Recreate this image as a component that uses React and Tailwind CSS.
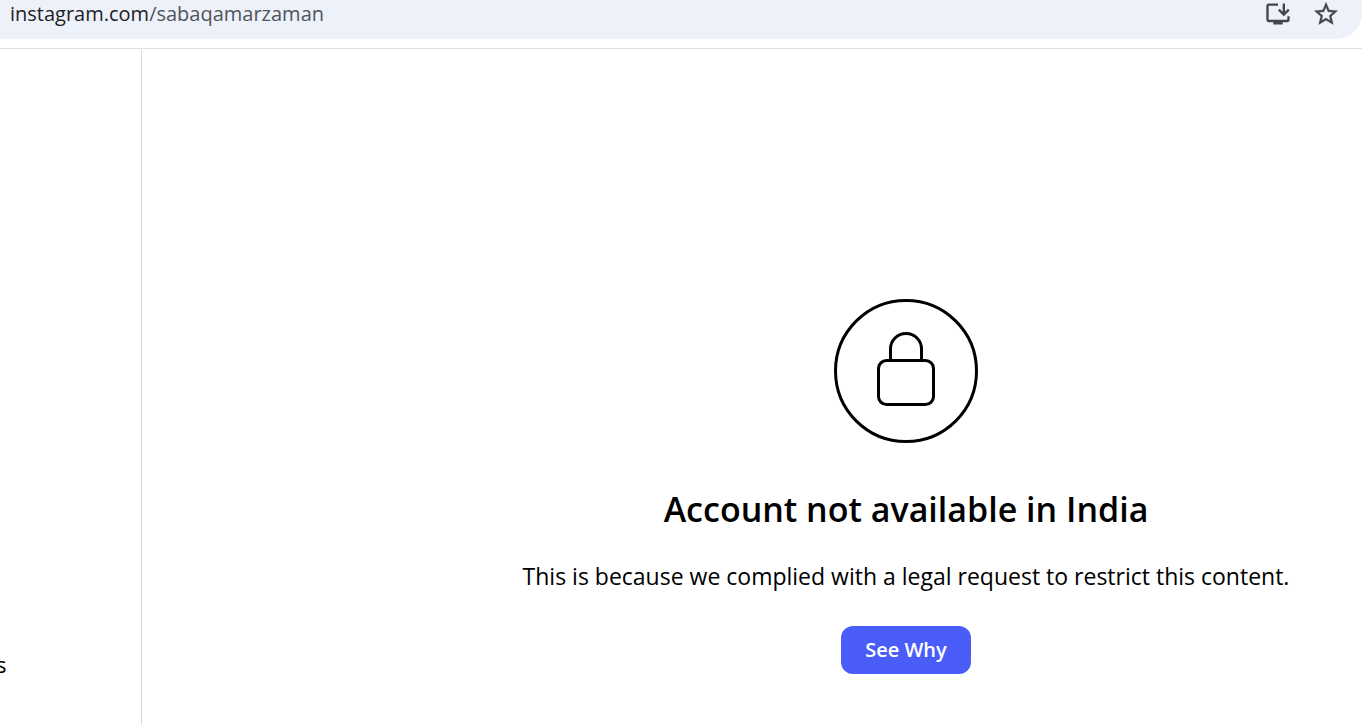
import { MdOutlineInstallDesktop } from "react-icons/md"

function StarIcon() {
    return (
        <svg width="28" height="28" viewBox="0 0 24 24" fill="currentColor" stroke="currentColor" strokeWidth="0.3" aria-hidden="true">
            <path d="M22 9.24l-7.19-.62L12 2 9.19 8.63 2 9.24l5.46 4.73L5.82 21 12 17.27 18.18 21l-1.63-7.03L22 9.24zM12 15.4l-3.76 2.27 1-4.28-3.32-2.88 4.38-.38L12 6.1l1.71 4.04 4.38.38-3.32 2.88 1 4.28L12 15.4z" />
        </svg>
    )
}

function AddressBar() {
    return (
        <header className="border-b border-b-[#dfe0e2] pb-[9px]">
            <div className="flex h-[39px] items-start justify-between rounded-br-[26px] bg-[#ecf1fa] pl-[10px] pr-[22px]">
                <p className="text-[20px] leading-7 text-[#1f2023]">
                    instagram.com<span className="text-[#50545a]">/sabaqamarzaman</span>
                </p>
                <div className="flex h-7 items-center gap-5 text-[#43474b]">
                    <button type="button" aria-label="Install app">
                        <MdOutlineInstallDesktop size={28} />
                    </button>
                    <button type="button" aria-label="Bookmark this tab">
                        <StarIcon />
                    </button>
                </div>
            </div>
        </header>
    )
}

function LockIcon() {
    return (
        <svg width="144" height="144" viewBox="0 0 144 144" fill="none" stroke="#000" strokeWidth="3" aria-hidden="true">
            <circle cx="72" cy="72" r="70.5" />
            <path d="M56.5 61V50a15.5 15.5 0 0 1 31 0v11" />
            <rect x="44.5" y="61.5" width="55" height="44" rx="8" />
        </svg>
    )
}

function Restricted() {
    return (
        <main className="flex flex-1 flex-col items-center pl-[308px] pt-[249px] text-center text-black">
            <LockIcon />
            <h1 className="mt-11 whitespace-nowrap text-[34px] font-semibold leading-[44px]">Account not available in India</h1>
            <p className="mt-7 whitespace-nowrap text-[23px] leading-[34px]">This is because we complied with a legal request to restrict this content.</p>
            <button type="button" className="mt-[33px] h-12 rounded-xl bg-[#4a5df9] px-6 text-[20px] font-semibold leading-6 text-white">See Why</button>
        </main>
    )
}

export default function App() {
    return (
        <div className="flex min-h-screen flex-col overflow-hidden bg-white font-['Open_Sans',sans-serif]">
            <AddressBar />
            <div className="flex flex-1 pt-px">
                <aside className="flex w-[142px] shrink-0 flex-col justify-end border-r border-r-[#dbdbdb] pb-[45px]">
                    <p className="-ml-1 text-[22px] leading-8 text-black">s</p>
                </aside>
                <Restricted />
            </div>
        </div>
    )
}
